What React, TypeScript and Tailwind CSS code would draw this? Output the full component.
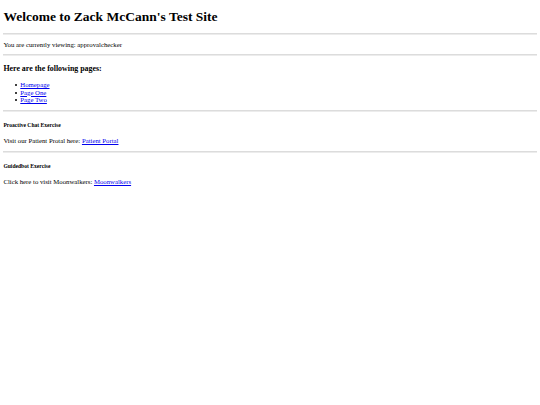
const link = "text-[#0000ee] underline";

function Rule({ className }: { className: string }) {
  return <div className={`h-[2px] shrink-0 border-t border-t-[#dcdcdc] bg-[#ececec] ${className}`} />;
}

function Item({ label }: { label: string }) {
  return (
    <li className="relative leading-[7.5px] before:absolute before:left-[-5.5px] before:top-[3px] before:h-[2px] before:w-[2px] before:rounded-full before:bg-black before:content-['']">
      <a href="#" className={link}>
        {label}
      </a>
    </li>
  );
}

export default function App() {
  return (
    <div className="min-h-[405px] bg-white text-black font-['Liberation_Serif','Times_New_Roman',serif] text-[6.75px] leading-[7.8px]">
      <div className="flex flex-col px-[3.4px]">
        <h1 className="mt-[9px] text-[13.5px] font-bold leading-[15.5px]">
          Welcome to Zack McCann's Test Site
        </h1>
        <Rule className="mt-[8.5px]" />
        <p className="mt-[5.6px]">You are currently viewing: approvalchecker</p>
        <Rule className="mt-[5.6px]" />
        <h3 className="mt-[8.5px] text-[7.9px] font-bold leading-[9.1px]">Here are the following pages:</h3>
        <ul className="mt-[7.65px] list-none pl-[16.9px]">
          <Item label="Homepage" />
          <Item label="Page One" />
          <Item label="Page Two" />
        </ul>
        <Rule className="mt-[6.25px]" />
        <h5 className="mt-[9.8px] text-[5.6px] font-bold leading-[6.44px]">Proactive Chat Exercise</h5>
        <p className="mt-[8.86px]">
          Visit our Patient Protal here:{" "}
          <a href="#" className={link}>
            Patient Portal
          </a>
        </p>
        <Rule className="mt-[6.1px]" />
        <h5 className="mt-[9.8px] text-[5.6px] font-bold leading-[6.44px]">Guidedbot Exercise</h5>
        <p className="mt-[8.86px]">
          Click here to visit Moonwalkers:{" "}
          <a href="#" className={link}>
            Moonwalkers
          </a>
        </p>
      </div>
    </div>
  );
}
